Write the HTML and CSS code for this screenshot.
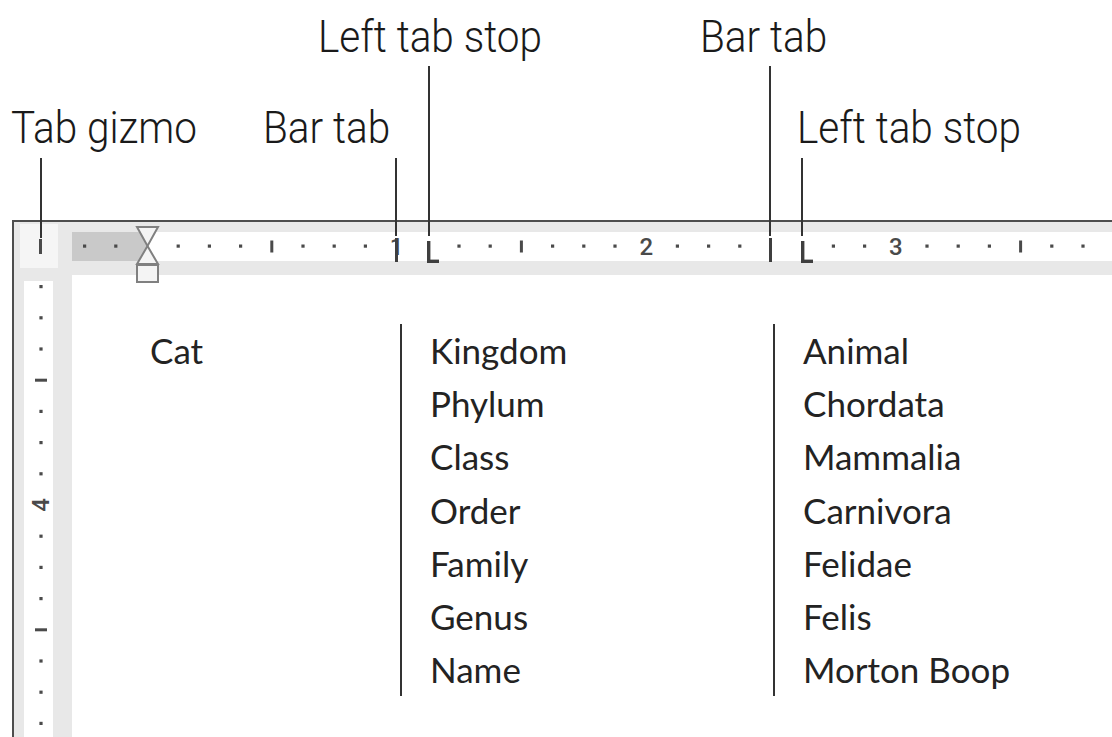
FILE: index.html
```html
<!DOCTYPE html>
<html lang="en">
<head>
    <meta charset="UTF-8">
    <meta name="viewport" content="width=device-width, initial-scale=1.0">
    <title>Tab stops and bar tabs</title>
    <link rel="stylesheet" href="styles.css">
</head>
<body>
    <div class="figure">
        <div class="callouts">
            <span class="label label-gizmo">Tab gizmo</span>
            <span class="label label-bar1">Bar tab</span>
            <span class="label label-left1">Left tab stop</span>
            <span class="label label-bar2">Bar tab</span>
            <span class="label label-left2">Left tab stop</span>

            <span class="leader leader-gizmo"></span>
            <span class="leader leader-bar1"></span>
            <span class="leader leader-left1"></span>
            <span class="leader leader-bar2"></span>
            <span class="leader leader-left2"></span>
        </div>

        <div class="window">
            <div class="hruler">
                <div class="gizmo-cell">
                    <div class="gizmo"><span class="gizmo-mark"></span></div>
                </div>
                <svg class="hruler-scale" width="1040" height="53" viewBox="0 0 1040 53">
                    <rect x="0" y="10" width="1040" height="29" fill="#ffffff"/>
                    <rect x="0" y="10" width="75" height="29" fill="#c9c9c9"/>
                    <g fill="#4a4a4a">
                        <rect x="11" y="22.5" width="3.2" height="3.2"/>
                        <rect x="42.2" y="22.5" width="3.2" height="3.2"/>
                        <rect x="104.6" y="22.5" width="3.2" height="3.2"/>
                        <rect x="135.8" y="22.5" width="3.2" height="3.2"/>
                        <rect x="167" y="22.5" width="3.2" height="3.2"/>
                        <rect x="198.3" y="18.5" width="3" height="12"/>
                        <rect x="229.4" y="22.5" width="3.2" height="3.2"/>
                        <rect x="260.6" y="22.5" width="3.2" height="3.2"/>
                        <rect x="291.8" y="22.5" width="3.2" height="3.2"/>
                        <rect x="385.4" y="22.5" width="3.2" height="3.2"/>
                        <rect x="416.6" y="22.5" width="3.2" height="3.2"/>
                        <rect x="447.9" y="18.5" width="3" height="12"/>
                        <rect x="479" y="22.5" width="3.2" height="3.2"/>
                        <rect x="510.2" y="22.5" width="3.2" height="3.2"/>
                        <rect x="541.4" y="22.5" width="3.2" height="3.2"/>
                        <rect x="603.8" y="22.5" width="3.2" height="3.2"/>
                        <rect x="635" y="22.5" width="3.2" height="3.2"/>
                        <rect x="666.2" y="22.5" width="3.2" height="3.2"/>
                        <rect x="759.8" y="22.5" width="3.2" height="3.2"/>
                        <rect x="791" y="22.5" width="3.2" height="3.2"/>
                        <rect x="853.4" y="22.5" width="3.2" height="3.2"/>
                        <rect x="884.6" y="22.5" width="3.2" height="3.2"/>
                        <rect x="915.8" y="22.5" width="3.2" height="3.2"/>
                        <rect x="947.1" y="18.5" width="3" height="12"/>
                        <rect x="978.2" y="22.5" width="3.2" height="3.2"/>
                        <rect x="1009.4" y="22.5" width="3.2" height="3.2"/>
                    </g>
                    <g class="ruler-num" fill="#4a4a4a" text-anchor="middle">
                        <text x="324.6" y="33">1</text>
                        <text x="574.2" y="33">2</text>
                        <text x="823.8" y="33">3</text>
                    </g>
                    <!-- first indent (hourglass) -->
                    <g fill="#f4f4f4" stroke="#808080" stroke-width="2">
                        <polygon points="65,5 86,5 75.5,24"/>
                        <polygon points="75.5,24 86,42 65,42"/>
                        <rect x="65" y="43" width="21" height="17"/>
                    </g>
                    <!-- tab markers -->
                    <g fill="#3f3f3f">
                        <rect x="323" y="16" width="3" height="24"/>
                        <rect x="355" y="19" width="3.4" height="22"/>
                        <rect x="355" y="37.6" width="12" height="3.4"/>
                        <rect x="697" y="16" width="3" height="24"/>
                        <rect x="729" y="19" width="3.4" height="22"/>
                        <rect x="729" y="37.6" width="12" height="3.4"/>
                    </g>
                </svg>
            </div>

            <div class="doc">
                <div class="vruler">
                    <svg width="58" height="462" viewBox="0 0 58 462">
                        <rect x="10" y="6" width="29" height="456" fill="#ffffff"/>
                        <g fill="#4a4a4a">
                            <rect x="25.4" y="10" width="3.2" height="3.2"/>
                            <rect x="25.4" y="41.2" width="3.2" height="3.2"/>
                            <rect x="25.4" y="72.4" width="3.2" height="3.2"/>
                            <rect x="21" y="103.7" width="12" height="3"/>
                            <rect x="25.4" y="134.8" width="3.2" height="3.2"/>
                            <rect x="25.4" y="166" width="3.2" height="3.2"/>
                            <rect x="25.4" y="197.2" width="3.2" height="3.2"/>
                            <rect x="25.4" y="259.6" width="3.2" height="3.2"/>
                            <rect x="25.4" y="290.8" width="3.2" height="3.2"/>
                            <rect x="25.4" y="322" width="3.2" height="3.2"/>
                            <rect x="21" y="353.3" width="12" height="3"/>
                            <rect x="25.4" y="384.4" width="3.2" height="3.2"/>
                            <rect x="25.4" y="415.6" width="3.2" height="3.2"/>
                            <rect x="25.4" y="446.8" width="3.2" height="3.2"/>
                        </g>
                        <text class="ruler-num" x="0" y="0" fill="#4a4a4a" text-anchor="middle" transform="translate(35 230) rotate(-90)">4</text>
                    </svg>
                </div>

                <div class="page">
                    <div class="tab-grid">
                        <div class="cell">Cat</div>
                        <div class="cell bar">Kingdom</div>
                        <div class="cell bar">Animal</div>

                        <div class="cell"></div>
                        <div class="cell bar">Phylum</div>
                        <div class="cell bar">Chordata</div>

                        <div class="cell"></div>
                        <div class="cell bar">Class</div>
                        <div class="cell bar">Mammalia</div>

                        <div class="cell"></div>
                        <div class="cell bar">Order</div>
                        <div class="cell bar">Carnivora</div>

                        <div class="cell"></div>
                        <div class="cell bar">Family</div>
                        <div class="cell bar">Felidae</div>

                        <div class="cell"></div>
                        <div class="cell bar">Genus</div>
                        <div class="cell bar">Felis</div>

                        <div class="cell"></div>
                        <div class="cell bar">Name</div>
                        <div class="cell bar">Morton Boop</div>
                    </div>
                </div>
            </div>
        </div>
    </div>
</body>
</html>
```

FILE: styles.css
```css
body {
    margin: 0;
    padding: 0;
    background-color: #fff;
    color: #222;
    width: 1112px;
    height: 737px;
    overflow: hidden;
}
.figure {
    position: relative;
    width: 1112px;
    height: 737px;
}

/* callout labels above the window */
.callouts {
    position: relative;
    height: 220px;
    z-index: 2;
}
.label {
    position: absolute;
    font-family: 'Roboto', 'Liberation Sans', sans-serif;
    font-weight: 300;
    font-size: 45px;
    line-height: 44px;
    color: #1a1a1a;
    white-space: nowrap;
    transform: scaleX(0.9);
    transform-origin: left top;
}
.label-left1 { left: 318px; top: 15px; }
.label-bar2 { left: 700px; top: 15px; }
.label-gizmo { left: 11px; top: 106px; }
.label-bar1 { left: 263px; top: 106px; }
.label-left2 { left: 797px; top: 106px; }

.leader {
    position: absolute;
    width: 2px;
    background-color: #333;
}
.leader-gizmo { left: 40px; top: 158px; height: 80px; }
.leader-bar1 { left: 395px; top: 158px; height: 78px; }
.leader-left2 { left: 801px; top: 158px; height: 78px; }
.leader-left1 { left: 428px; top: 66px; height: 170px; }
.leader-bar2 { left: 769px; top: 66px; height: 170px; }

/* the word window */
.window {
    margin-left: 12px;
    border-top: 2px solid #4d4d4d;
    border-left: 2px solid #4d4d4d;
    height: 515px;
    display: flex;
    flex-direction: column;
}
.hruler {
    position: relative;
    z-index: 1;
    height: 53px;
    background-color: #e8e8e8;
    display: flex;
}
.gizmo-cell {
    width: 58px;
    flex-shrink: 0;
}
.gizmo {
    margin: 2px 0 0 6px;
    width: 38px;
    height: 44px;
    padding-left: 19px;
    box-sizing: border-box;
    background-color: #f5f5f5;
    display: flex;
    align-items: center;
}
.gizmo-mark {
    width: 3px;
    height: 15px;
    background-color: #4a4a4a;
}
.hruler-scale {
    display: block;
    overflow: visible;
}
.ruler-num {
    font-family: 'Roboto', 'Liberation Sans', sans-serif;
    font-weight: 500;
    font-size: 24px;
}

.doc {
    flex: 1;
    display: flex;
}
.vruler {
    width: 58px;
    flex-shrink: 0;
    background-color: #e8e8e8;
}
.vruler svg {
    display: block;
}
.page {
    flex: 1;
    background-color: #fff;
    padding-top: 49px;
}
.tab-grid {
    margin-left: 78px;
    display: grid;
    grid-template-columns: 250px 373px 1fr;
}
.cell {
    font-family: 'Lato', sans-serif;
    font-size: 35px;
    line-height: 53.2px;
    color: #232323;
}
.cell.bar {
    border-left: 2px solid #333;
    padding-left: 28px;
}
```
